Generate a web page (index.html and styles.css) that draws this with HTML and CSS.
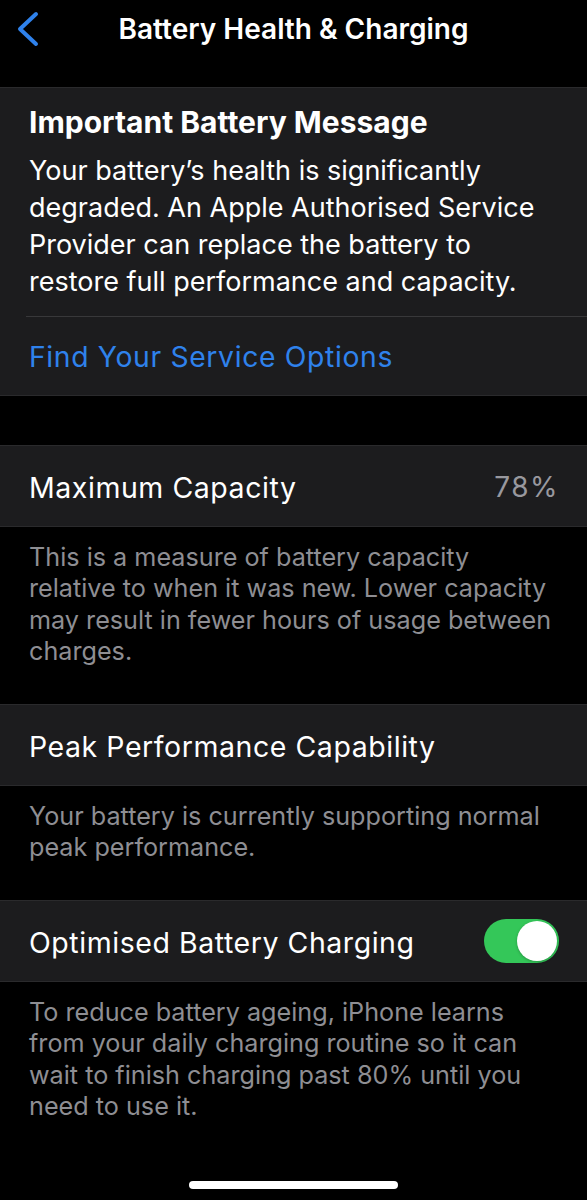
FILE: index.html
```html
<!DOCTYPE html>
<html lang="en">
<head>
<meta charset="utf-8">
<title>Battery Health &amp; Charging</title>
<link rel="stylesheet" href="styles.css">
</head>
<body>
<div class="screen">
  <header class="nav">
    <svg class="back" viewBox="0 0 24 36" width="24" height="36" aria-hidden="true">
      <path d="M21 3 L5 18 L21 33" fill="none" stroke="#2f82ec" stroke-width="4" stroke-linecap="round" stroke-linejoin="round"/>
    </svg>
    <h1 class="title">Battery Health &amp; Charging</h1>
  </header>

  <section class="card">
    <div class="message">
      <h2 class="msg-title">Important Battery Message</h2>
      <p class="msg-body">Your battery’s health is significantly degraded. An Apple Authorised Service Provider can replace the battery to restore full performance and capacity.</p>
    </div>
    <div class="link-row"><span class="link">Find Your Service Options</span></div>
  </section>

  <div class="spacer"></div>

  <section class="card">
    <div class="row"><span class="label">Maximum Capacity</span><span class="value">78%</span></div>
  </section>
  <p class="footer f-cap">This is a measure of battery capacity relative to when it was new. Lower capacity may result in fewer hours of usage between charges.</p>

  <section class="card">
    <div class="row"><span class="label">Peak Performance Capability</span></div>
  </section>
  <p class="footer f-peak">Your battery is currently supporting normal peak performance.</p>

  <section class="card">
    <div class="row"><span class="label">Optimised Battery Charging</span><span class="toggle"><span class="knob"></span></span></div>
  </section>
  <p class="footer f-opt">To reduce battery ageing, iPhone learns from your daily charging routine so it can wait to finish charging past 80% until you need to use it.</p>

  <div class="home-bar"></div>
</div>
</body>
</html>
```

FILE: styles.css
```css
html, body {
  margin: 0;
  padding: 0;
  background: #000;
}

.screen {
  position: relative;
  width: 587px;
  height: 1200px;
  overflow: hidden;
  background: #000;
  font-family: Inter, "Noto Sans", "Liberation Sans", sans-serif;
  color: #fff;
}

.nav {
  height: 87px;
  display: flex;
  align-items: flex-start;
  justify-content: center;
  position: relative;
}

.back {
  position: absolute;
  left: 15px;
  top: 11px;
}

.title {
  margin: 0;
  padding-top: 11px;
  font-size: 28px;
  font-weight: 600;
  line-height: 36px;
  letter-spacing: 0;
}

.card {
  background: #1c1c1e;
  border-top: 1px solid #2a2a2c;
  border-bottom: 1px solid #2a2a2c;
}

.message {
  padding: 17px 20px 16px 29px;
}

.msg-title {
  margin: 0 0 12px;
  font-size: 30px;
  font-weight: 700;
  line-height: 35px;
  letter-spacing: 0;
}

.msg-body {
  margin: 0;
  font-size: 27px;
  line-height: 37px;
  letter-spacing: 0;
  font-weight: 400;
}

.link-row {
  margin-left: 26px;
  border-top: 1px solid #38383a;
  height: 78px;
  display: flex;
  align-items: center;
  padding-left: 3px;
}

.link {
  color: #2f82ec;
  font-size: 28.3px;
  letter-spacing: 0.65px;
  padding-top: 2px;
}

.spacer {
  height: 49px;
}

.row {
  height: 80px;
  display: flex;
  align-items: center;
  justify-content: space-between;
  padding: 0 28px 0 29px;
}

.label {
  font-size: 28.5px;
  letter-spacing: 0.55px;
  padding-top: 2px;
}

.value {
  font-size: 28px;
  color: #98989e;
  letter-spacing: 1.5px;
  padding-top: 2px;
}

.footer {
  margin: 0;
  color: #8e8e93;
  font-size: 25.2px;
  line-height: 31.3px;
  letter-spacing: 0;
  padding: 15px 29px 0 29px;
}

.f-cap { height: 162px; }
.f-peak { height: 99px; }
.f-opt { height: 160px; }

.toggle {
  width: 75px;
  height: 44px;
  border-radius: 22px;
  background: #34c759;
  display: flex;
  align-items: center;
  justify-content: flex-end;
  padding: 0 2px;
  box-sizing: border-box;
}

.knob {
  width: 40px;
  height: 40px;
  border-radius: 50%;
  background: #fff;
  box-shadow: 0 1px 3px rgba(0, 0, 0, 0.25);
}

.home-bar {
  position: absolute;
  left: 189px;
  top: 1181px;
  width: 209px;
  height: 8px;
  border-radius: 4px;
  background: #fff;
}
```
